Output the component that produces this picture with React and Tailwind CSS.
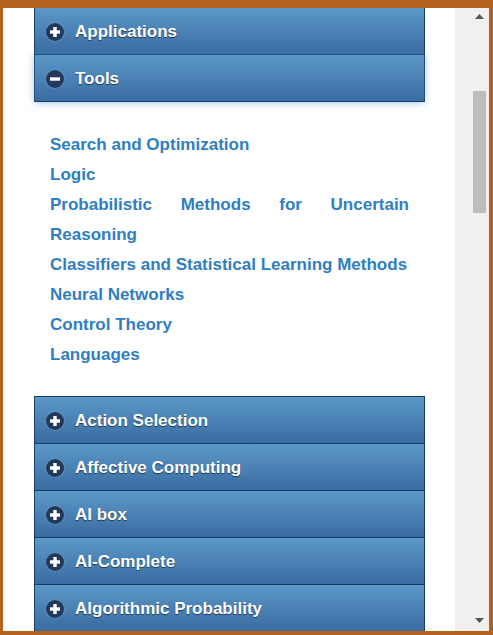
import { ChevronUp } from 'lucide-react'

const before = ['Applications']
const after = ['Action Selection', 'Affective Computing', 'AI box', 'AI-Complete', 'Algorithmic Probability']
const links = [
  'Search and Optimization',
  'Logic',
  'Probabilistic Methods for Uncertain Reasoning',
  'Classifiers and Statistical Learning Methods',
  'Neural Networks',
  'Control Theory',
  'Languages',
]

function Sign({ open }) {
  return (
    <span className="w-[18px] h-[18px] rounded-full bg-[#22395a] flex items-center justify-center shrink-0 shadow-[0_0_0_1px_rgba(120,160,200,0.45)]">
      <svg width="12" height="12" viewBox="0 0 12 12">
        <rect x="1" y="4.3" width="10" height="3.4" fill="#fff" />
        {!open && <rect x="4.3" y="1" width="3.4" height="10" fill="#fff" />}
      </svg>
    </span>
  )
}

function Header({ title, open }) {
  return (
    <div
      className={`h-[47px] flex items-center gap-[11px] pl-[11px] pt-[1px] border-b border-[#173e62] bg-gradient-to-b from-[#5c98c8] to-[#3a6ca2] ${
        open ? 'relative shadow-[0_0_8px_rgba(70,140,210,0.6)]' : ''
      }`}
    >
      <Sign open={open} />
      <span className="text-white font-bold text-[17px] pt-[1px] [text-shadow:0_1px_1px_rgba(0,0,0,0.55)]">{title}</span>
    </div>
  )
}

export default function App() {
  return (
    <div className="w-[493px] h-[635px] bg-[#b5621f] pt-[8px] pl-[3px] pr-[4px] pb-[4px] flex overflow-hidden" style={{ fontFamily: '"Liberation Sans", Arial, sans-serif' }}>
      <div className="flex-1 bg-white overflow-hidden pl-[31px] pr-[30px]">
        <div className="border-x border-[#173e62]">
          {before.map((t) => (
            <Header key={t} title={t} />
          ))}
          <Header title="Tools" open />
        </div>
        <div className="px-[16px] pt-[28px] pb-[26px]">
          {links.map((l) => (
            <div key={l} className="text-[17px] leading-[30px] font-bold text-[#2f7ec2] text-justify">
              {l}
            </div>
          ))}
        </div>
        <div className="border-x border-t border-[#173e62]">
          {after.map((t) => (
            <Header key={t} title={t} />
          ))}
        </div>
      </div>
      <div className="w-[34px] bg-[#f0f0f0] flex flex-col items-end pr-[2px] pt-[5px]">
        <div className="w-[15px] flex flex-col items-center h-full">
          <svg width="9" height="5" viewBox="0 0 9 5" className="mt-[1px]">
            <path d="M0 5 L4.5 0 L9 5 Z" fill="#555" />
          </svg>
          <div className="w-[13px] h-[122px] bg-[#bdbdbd] mt-[72px]" />
          <div className="flex-1" />
          <svg width="9" height="5" viewBox="0 0 9 5" className="mb-[8px]">
            <path d="M0 0 L4.5 5 L9 0 Z" fill="#555" />
          </svg>
        </div>
      </div>
    </div>
  )
}
